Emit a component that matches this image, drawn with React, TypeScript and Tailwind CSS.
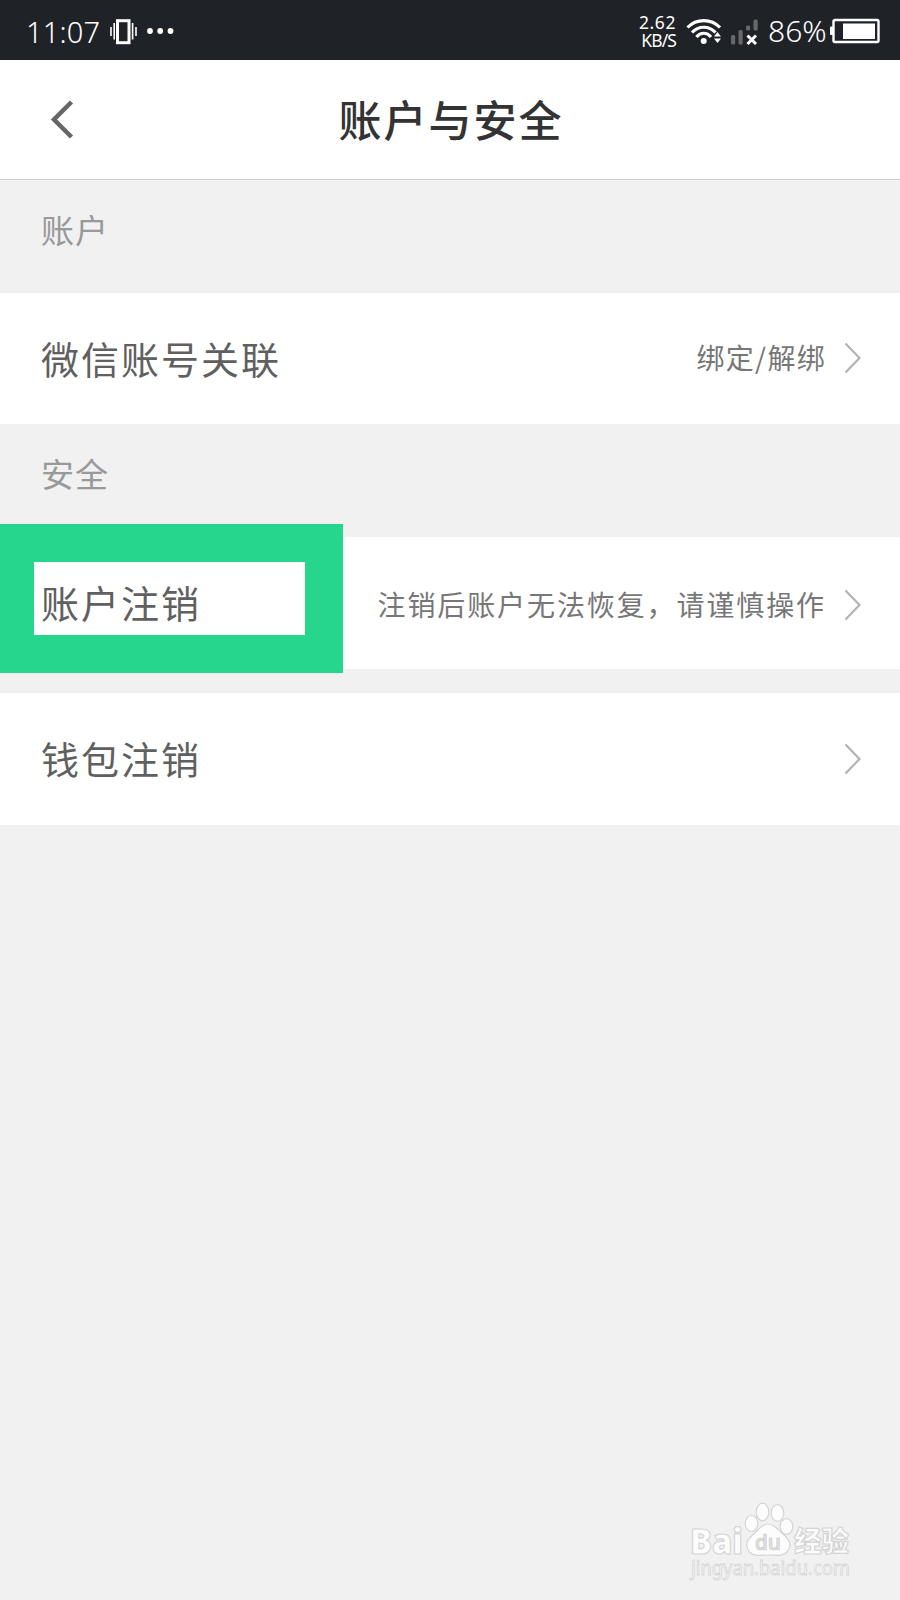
import type { ReactNode } from "react";

function StatusBar() {
    return (
        <div className="flex h-[60px] items-center bg-[#1f2227] text-white font-['Noto_Sans','Open_Sans',sans-serif]">
            <span className="ml-[26px] w-[72px] pt-[2px] text-[29px] font-light leading-none tracking-[0.2px] whitespace-nowrap">11:07</span>

            {/* 振动 */}
            <svg className="ml-[12px] mt-[3px] h-[26px] w-[28px]" viewBox="0 0 28 26" fill="none" stroke="white">
                <rect x="7.500" y="1.700" width="11.500" height="22" strokeWidth="3" />
                <path d="M1 8v9M4.200 4v16.500M22.600 4v16.500M26 8v9" strokeWidth="1.600" />
            </svg>

            {/* 更多通知 */}
            <svg className="ml-[9px] mt-[2px] h-[6px] w-[27px]" viewBox="0 0 27 6" fill="white">
                <circle cx="3" cy="3" r="2.900" />
                <circle cx="13.200" cy="3" r="2.900" />
                <circle cx="23.500" cy="3" r="2.900" />
            </svg>

            <div className="ml-auto mr-5 flex items-center">
                <div className="flex w-[40px] flex-col items-end pt-px text-[17.500px] leading-[18px]">
                    <span className="tracking-[0.600px]">2.62</span>
                    <span className="tracking-[-0.900px]">KB/S</span>
                </div>

                {/* Wi-Fi */}
                <svg className="ml-[10px] mt-[3px] h-[28px] w-[37px]" viewBox="0 0 37 28" fill="none" stroke="white">
                    <path d="M1.500 9.500C10.500 0.200 25 0.200 34 9.500" strokeWidth="3.200" />
                    <path d="M6 14.500C12.500 7.500 23 7.500 29.500 14.500" strokeWidth="3.200" />
                    <path d="M10.500 19C14.500 14 21 14 25 19" strokeWidth="3.200" />
                    <circle cx="17.700" cy="23" r="3" fill="white" stroke="none" />
                    <path d="M28 18.500l3.500-4.500 3.500 4.500zM28 20.500h7l-3.500 4.500z" fill="white" stroke="none" />
                </svg>

                {/* 信号 */}
                <svg className="ml-[8px] mt-[3px] h-[28px] w-[28px]" viewBox="0 0 28 28">
                    <g fill="#66686b">
                        <rect x="0" y="17" width="4.200" height="9.500" rx="1.500" />
                        <rect x="7.500" y="12" width="4.200" height="14.500" rx="1.500" />
                        <rect x="15" y="7.500" width="4.200" height="5" rx="1.500" />
                        <rect x="22.500" y="1.500" width="4.200" height="11" rx="1.500" />
                    </g>
                    <path d="M16.500 17.500l8.500 8.500M25 17.500l-8.500 8.500" stroke="white" strokeWidth="3" />
                </svg>

                <span className="ml-[9px] w-[60px] pt-[2px] text-[30px] font-light leading-none whitespace-nowrap">86%</span>

                {/* 电池 */}
                <svg className="ml-[2px] mt-[2px] h-[26px] w-[50px]" viewBox="0 0 50 26">
                    <rect x="0" y="8.500" width="4" height="8.500" rx="1" fill="white" />
                    <rect x="3.500" y="2" width="45" height="22" rx="1.500" fill="none" stroke="white" strokeWidth="2.400" />
                    <rect x="13" y="5.500" width="32" height="15.500" fill="white" />
                </svg>
            </div>
        </div>
    );
}

function SectionTitle({ children }: { children: ReactNode }) {
    return (
        <div className="h-[113px] pl-[41px] pt-[31px] text-[33px] leading-[36px] tracking-[1px] text-[#999]">
            {children}
        </div>
    );
}

function ChevronRight() {
    return (
        <svg className="ml-[18px] mr-[39px] h-[32px] w-[17px] shrink-0" viewBox="0 0 17 32" fill="none" stroke="#b3b3b3" strokeWidth="2.200">
            <path d="M1.500 1.500L15.500 16L1.500 30.500" />
        </svg>
    );
}

function Row({ label, value, valueClass = "" }: { label: string; value?: string; valueClass?: string }) {
    return (
        <div className="flex h-full items-center bg-white pl-[41px]">
            <span className="pb-[2px] text-[38px] leading-none tracking-[2px] text-[#606060]">{label}</span>
            <div className={`ml-auto flex items-center ${valueClass}`}>
                <span className="pb-[2px] text-[28px] leading-none text-[#777] whitespace-nowrap">{value}</span>
                <ChevronRight />
            </div>
        </div>
    );
}

function Watermark() {
    return (
        <svg
            className="absolute left-[686px] top-[1498px] h-[96px] w-[180px] overflow-visible"
            viewBox="0 0 180 96"
            fill="#fcfcfc"
            stroke="#d4d4d4"
            strokeWidth="1.200"
        >
            <text x="4" y="55.500" fontSize="36" fontWeight="800" textLength="53" lengthAdjust="spacingAndGlyphs" fontFamily="Open Sans, sans-serif">Bai</text>
            <ellipse cx="65.500" cy="25.500" rx="6.300" ry="8" />
            <ellipse cx="76.500" cy="14" rx="6.300" ry="8.800" />
            <ellipse cx="91.500" cy="15" rx="6.300" ry="8.300" />
            <ellipse cx="100.500" cy="28.500" rx="6.300" ry="7.800" />
            <path d="M82 26C89 26 93 33 98 37C105 43 105 49 101.500 53.500C97 59 90 57 82 57C75 57 68 59 63.500 54C59.500 49 59.500 43 66 37.500C72 33 75 26 82 26Z" />
            <text x="69" y="51.500" fontSize="22" fontWeight="600" fill="#e2e2e2" stroke="#c8c8c8" strokeWidth="0.700" textLength="26" lengthAdjust="spacingAndGlyphs" fontFamily="Open Sans, sans-serif">du</text>
            <text x="108" y="53.500" fontSize="28" fontWeight="900" textLength="55" lengthAdjust="spacingAndGlyphs" fontFamily="Noto Sans CJK SC, sans-serif">经验</text>
            <text x="5" y="77" fontSize="19" strokeWidth="0.800" textLength="159" lengthAdjust="spacingAndGlyphs" fontFamily="Noto Sans, sans-serif">jingyan.baidu.com</text>
        </svg>
    );
}

export default function App() {
    return (
        <div className="relative h-[1600px] w-[900px] overflow-hidden bg-[#f1f1f1] font-['Noto_Sans_CJK_SC',sans-serif]">
            <StatusBar />

            <header className="grid h-[120px] grid-cols-[100px_1fr_100px] items-center border-b border-[#d0d0d0] bg-white">
                <svg className="ml-[50px] h-[40px] w-[24px]" viewBox="0 0 24 40" fill="none" stroke="#666" strokeWidth="4.500">
                    <path d="M21.500 2L4 19.500L21.500 37" />
                </svg>
                <h1 className="pb-[2px] pl-[2px] text-center text-[43px] font-medium leading-none tracking-[2px] text-[#333]">账户与安全</h1>
            </header>

            <SectionTitle>账户</SectionTitle>
            <div className="h-[131px]">
                <Row label="微信账号关联" value="绑定/解绑" valueClass="pb-[2px] tracking-[1.300px]" />
            </div>

            <SectionTitle>安全</SectionTitle>
            <div className="relative h-[132px]">
                <Row label="账户注销" value="注销后账户无法恢复，请谨慎操作" valueClass="pt-[4px] tracking-[1.900px]" />
                {/* 高亮框 */}
                <div className="absolute left-0 top-[-13px] h-[149px] w-[343px] border-[38px] border-l-[34px] border-[#25d68c]" />
            </div>

            <div className="mt-6 h-[132px]">
                <Row label="钱包注销" />
            </div>

            <Watermark />
        </div>
    );
}
